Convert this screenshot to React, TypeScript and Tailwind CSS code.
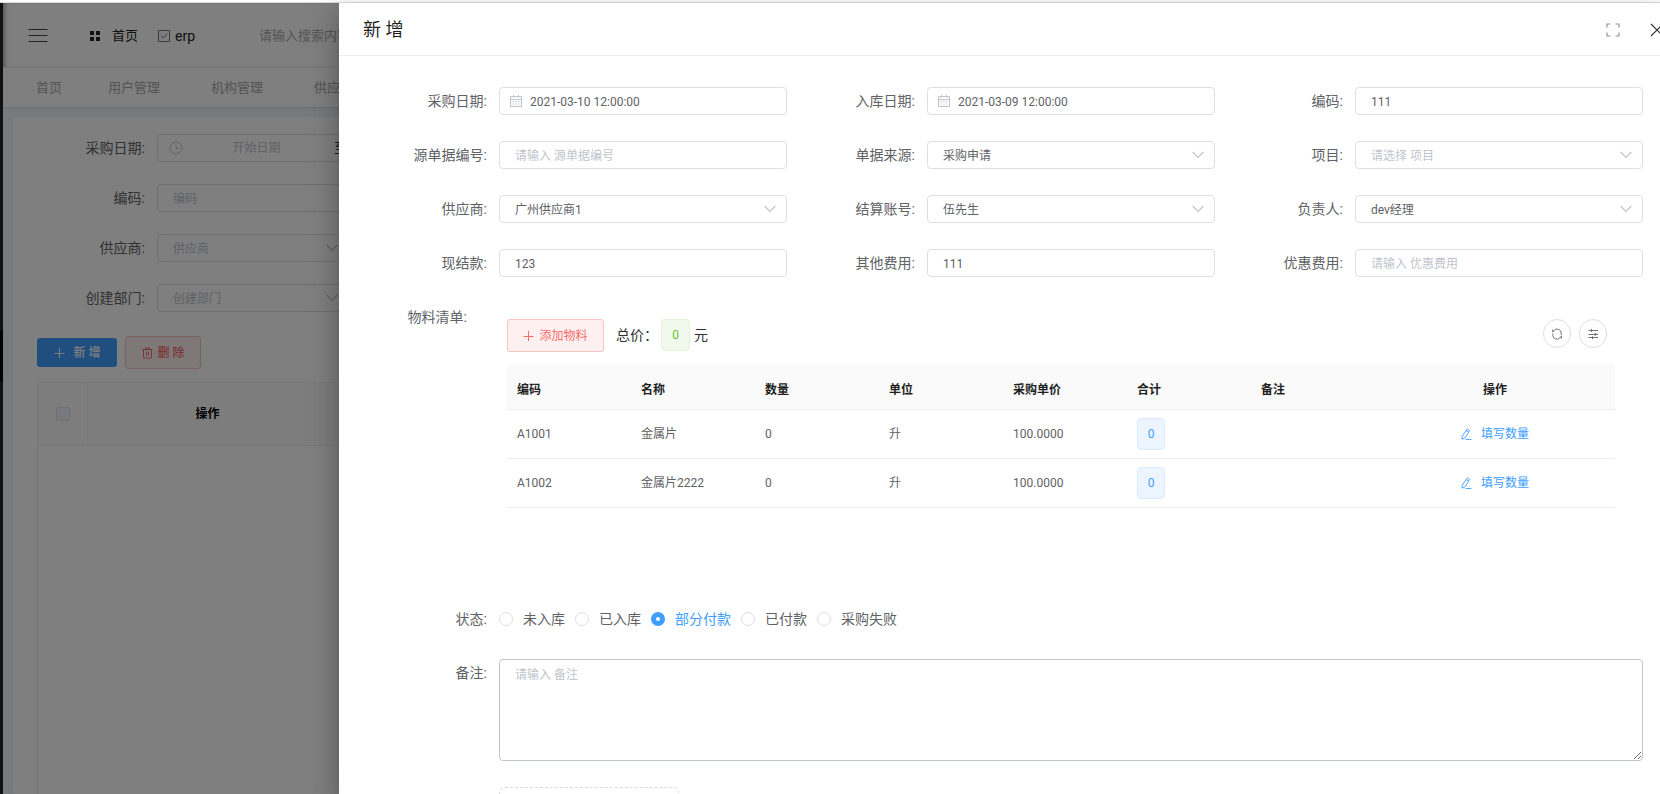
import { useState } from "react";
import type { ReactNode } from "react";

type FieldConfig = {
  id: string;
  label: string;
  type: "date" | "input" | "select";
  value?: string;
  placeholder?: string;
};

const FIELDS: FieldConfig[] = [
  { id: "purchaseDate", label: "采购日期", type: "date", value: "2021-03-10 12:00:00" },
  { id: "stockDate", label: "入库日期", type: "date", value: "2021-03-09 12:00:00" },
  { id: "code", label: "编码", type: "input", value: "111" },
  { id: "sourceNo", label: "源单据编号", type: "input", placeholder: "请输入 源单据编号" },
  { id: "sourceType", label: "单据来源", type: "select", value: "采购申请" },
  { id: "project", label: "项目", type: "select", placeholder: "请选择 项目" },
  { id: "supplier", label: "供应商", type: "select", value: "广州供应商1" },
  { id: "account", label: "结算账号", type: "select", value: "伍先生" },
  { id: "owner", label: "负责人", type: "select", value: "dev经理" },
  { id: "cash", label: "现结款", type: "input", value: "123" },
  { id: "otherFee", label: "其他费用", type: "input", value: "111" },
  { id: "discount", label: "优惠费用", type: "input", placeholder: "请输入 优惠费用" },
];

const MATERIALS = [
  { code: "A1001", name: "金属片", count: 0, unit: "升", price: "100.0000", total: 0 },
  { code: "A1002", name: "金属片2222", count: 0, unit: "升", price: "100.0000", total: 0 },
];

const COLUMNS = ["编码", "名称", "数量", "单位", "采购单价", "合计", "备注"];

const STATUSES = ["未入库", "已入库", "部分付款", "已付款", "采购失败"];

function ChevronIcon() {
  return (
    <svg viewBox="0 0 12 12" className="pointer-events-none absolute right-[11px] top-2 h-3 w-3" fill="none" stroke="#c0c4cc" strokeWidth="1.1">
      <path d="M0.7 3 L6 8.4 L11.3 3" />
    </svg>
  );
}

function CalendarIcon() {
  return (
    <svg viewBox="0 0 12 12" className="pointer-events-none absolute left-[11px] top-2 h-3 w-3" fill="none" stroke="#c0c4cc">
      <path d="M0.5 1.5h11v10h-11z M0.5 4.5h11" />
      <path d="M3.5 0v2.5 M8.5 0v2.5" />
      <path d="M2.5 6.5h1.4 M5.3 6.5h1.4 M8.1 6.5h1.4 M2.5 9h1.4 M5.3 9h1.4 M8.1 9h1.4" />
    </svg>
  );
}

function PlusIcon() {
  return (
    <svg viewBox="0 0 12 12" className="h-3 w-3" fill="none" stroke="currentColor">
      <path d="M5.5 1v10 M0.5 6.5h10" />
    </svg>
  );
}

function TrashIcon() {
  return (
    <svg viewBox="0 0 12 12" className="h-3 w-3" fill="none" stroke="currentColor">
      <path d="M0.5 2.5h10 M3.5 2.5v-1.5h4v1.5 M1.5 2.5v8.5h8v-8.5 M4.5 4.8v4 M6.5 4.8v4" />
    </svg>
  );
}

function EditIcon() {
  return (
    <svg viewBox="0 0 12 12" className="h-3 w-3" fill="none" stroke="currentColor" strokeWidth="0.9">
      <path d="M6.2 1 L8.6 2.5 L4.2 9.8 L1 11.2 L1.2 8.2 Z M5.2 2.7 L7.6 4.2 M4.5 11.5h6" />
    </svg>
  );
}

function RefreshIcon() {
  return (
    <svg viewBox="0 0 12 12" className="h-3 w-3" fill="none" stroke="currentColor">
      <path d="M1.8 4.3v-2.8 M1.8 3.2h1.6 M3.4 2.2 a4 4 0 0 1 6.8 2.6v2.2" strokeWidth="0.9" />
      <path d="M10.4 7.8v2.8 M10.4 9.2h-1.8 M8.6 10 a4 4 0 0 1 -6.8 -2.6v-1.8" strokeWidth="0.9" />
    </svg>
  );
}

function OperationIcon() {
  return (
    <svg viewBox="0 0 12 12" className="h-3 w-3" fill="none" stroke="currentColor">
      <path d="M1.5 2.5h9.5 M1.5 6.5h9.5 M1.5 9.5h9.5" strokeWidth="0.9" />
      <path d="M4.5 1.2v2.6 M8.2 5v2.8 M5.5 8.5v2.6" />
    </svg>
  );
}

const INPUT_CLASS =
  "block h-7 w-full appearance-none rounded border border-[#dcdfe6] bg-white pt-px text-xs text-[#606266] placeholder:text-[#c0c4cc] focus:outline-none";

function SelectBox({ id, value, placeholder }: { id: string; value?: string; placeholder?: string }) {
  return (
    <div className="relative">
      <select
        id={id}
        defaultValue={value ?? ""}
        className={`${INPUT_CLASS} px-[15px] ${value ? "" : "!text-[#c0c4cc]"}`}
      >
        <option value={value ?? ""}>{value ?? placeholder}</option>
      </select>
      <ChevronIcon />
    </div>
  );
}

function Field({ field }: { field: FieldConfig }) {
  return (
    <div className="flex px-2.5">
      <label htmlFor={field.id} className="w-[120px] shrink-0 pr-3 text-right text-sm leading-7">
        {field.label}:
      </label>
      <div className="min-w-0 flex-1">
        {field.type === "select" && <SelectBox id={field.id} value={field.value} placeholder={field.placeholder} />}
        {field.type === "input" && (
          <input
            id={field.id}
            type="text"
            defaultValue={field.value}
            placeholder={field.placeholder}
            className={`${INPUT_CLASS} px-[15px]`}
          />
        )}
        {field.type === "date" && (
          <div className="relative">
            <input id={field.id} type="text" defaultValue={field.value} className={`${INPUT_CLASS} pl-[30px] pr-3`} />
            <CalendarIcon />
          </div>
        )}
      </div>
    </div>
  );
}

function FilterRow({ id, label, children }: { id: string; label: string; children: ReactNode }) {
  return (
    <div className="flex">
      <label htmlFor={id} className="w-36 shrink-0 pr-3 text-right text-sm leading-7">
        {label}:
      </label>
      {children}
    </div>
  );
}

/* list page that lies under the mask */
function ListPage() {
  return (
    <div className="flex min-h-0 flex-1">
      <aside className="w-[3px] shrink-0 bg-[#20222a]">
        <div className="mt-[328px] h-[50px] bg-black" />
      </aside>
      <div className="flex min-w-0 flex-1 flex-col bg-[#f0f2f5]">
        <header className="flex h-[65px] shrink-0 items-center border-b border-[#f0f0f0] bg-white pl-[25px] pt-px text-[13px] shadow-[inset_4px_0_4px_-2px_rgba(0,21,41,0.35)]">
          <button type="button" aria-label="菜单" className="mr-[41px]">
            <svg viewBox="0 0 20 14" className="h-3.5 w-5" stroke="#444" strokeWidth="1.2">
              <path d="M0.5 0.5h19 M0.5 6.5h19 M0.5 12.5h19" />
            </svg>
          </button>
          <a href="#home" className="mr-5 flex items-center gap-[11px] text-[#222]">
            <svg viewBox="0 0 12 12" className="h-3 w-3" fill="#222">
              <path d="M1 1h4v4h-4z M7 1h4v4h-4z M1 7h4v4h-4z M7 7h4v4h-4z" />
            </svg>
            首页
          </a>
          <a href="#erp" className="flex items-center gap-[5px] text-sm text-[#222]">
            <svg viewBox="0 0 12 12" className="h-3 w-3" fill="none" stroke="#777">
              <path d="M0.5 0.5h11v11h-11z M3 5.8 L5.3 8 L9.2 3.6" />
            </svg>
            erp
          </a>
          <input
            type="text"
            aria-label="搜索"
            placeholder="请输入搜索内容"
            className="ml-16 w-48 bg-transparent text-[13px] placeholder:text-[#aaa] focus:outline-none"
          />
        </header>
        <nav className="flex h-[39px] shrink-0 items-center bg-white text-[13px] text-[#a8a8a8] shadow-[0_1px_2px_rgba(0,0,0,0.1)]">
          <a href="#t1" className="pl-[33px] pr-5">首页</a>
          <a href="#t2" className="pl-[26px] pr-[25px]">用户管理</a>
          <a href="#t3" className="pl-[26px] pr-[25px]">机构管理</a>
          <a href="#t4" className="pl-[26px] pr-[25px]">供应商</a>
        </nav>
        <main className="mx-2.5 mt-2.5 flex flex-1 flex-col rounded bg-white pt-[17px]">
          <div className="flex flex-col gap-[22px]">
            <FilterRow id="f-date" label="采购日期">
              <div className="flex h-7 w-[350px] items-center rounded border border-[#dcdfe6] pl-[11px]">
                <svg viewBox="0 0 14 14" className="h-3.5 w-3.5" fill="none" stroke="#c0c4cc">
                  <circle cx="7" cy="7" r="6" />
                  <path d="M7 3.5v4h3.5" />
                </svg>
                <input
                  id="f-date"
                  type="text"
                  placeholder="开始日期"
                  className="w-[151px] pr-1 text-center text-xs placeholder:text-[#c0c4cc] focus:outline-none"
                />
                <span className="text-sm text-[#303133]">至</span>
              </div>
            </FilterRow>
            <FilterRow id="f-code" label="编码">
              <div className="w-48">
                <input id="f-code" type="text" placeholder="编码" className={`${INPUT_CLASS} px-[15px]`} />
              </div>
            </FilterRow>
            <FilterRow id="f-supplier" label="供应商">
              <div className="w-48">
                <SelectBox id="f-supplier" placeholder="供应商" />
              </div>
            </FilterRow>
            <FilterRow id="f-dept" label="创建部门">
              <div className="w-48">
                <SelectBox id="f-dept" placeholder="创建部门" />
              </div>
            </FilterRow>
          </div>
          <div className="ml-6 mt-6 flex items-center gap-2 text-xs font-medium">
            <button type="button" className="flex h-[29px] w-20 items-center justify-center gap-2 rounded-[3px] bg-[#409eff] text-white">
              <PlusIcon />
              新 增
            </button>
            <button
              type="button"
              className="flex h-[33px] w-[76px] items-center justify-center gap-1 rounded-[3px] border border-[#fbc4c4] bg-[#fef0f0] text-[#f56c6c]"
            >
              <TrashIcon />
              删 除
            </button>
          </div>
          <div className="ml-6 mt-[13px] flex-1 border-l border-t border-[#ebeef5]">
            <table className="w-full table-fixed border-separate border-spacing-0 text-xs">
              <colgroup>
                <col className="w-[50px]" />
                <col className="w-60" />
                <col />
              </colgroup>
              <thead>
                <tr className="h-[63px] bg-[#fafafa]">
                  <th className="border-b border-r border-[#ebeef5] p-0">
                    <input
                      type="checkbox"
                      aria-label="全选"
                      className="mx-auto block h-3.5 w-3.5 appearance-none rounded-xs border border-[#dcdfe6] bg-[#edf2fc]"
                    />
                  </th>
                  <th className="border-b border-r border-[#ebeef5] p-0 font-bold text-black">操作</th>
                  <th className="border-b border-[#ebeef5] p-0" />
                </tr>
              </thead>
            </table>
          </div>
        </main>
      </div>
    </div>
  );
}

function MaterialTable() {
  return (
    <table className="mt-[13px] w-full table-fixed border-separate border-spacing-0 text-left text-xs">
      <colgroup>
        {COLUMNS.map((c) => (
          <col key={c} />
        ))}
        <col className="w-60" />
      </colgroup>
      <thead>
        <tr className="h-[45px] bg-[#fafafa] text-[#1f1f1f]">
          {COLUMNS.map((c) => (
            <th key={c} className="border-b border-[#ebeef5] px-2.5 pb-0 pt-1.5 font-bold">{c}</th>
          ))}
          <th className="border-b border-[#ebeef5] px-2.5 pb-0 pt-1.5 text-center font-bold">操作</th>
        </tr>
      </thead>
      <tbody>
        {MATERIALS.map((m) => (
          <tr key={m.code} className="h-[49px]">
            <td className="border-b border-[#ebeef5] px-2.5">{m.code}</td>
            <td className="border-b border-[#ebeef5] px-2.5">{m.name}</td>
            <td className="border-b border-[#ebeef5] px-2.5">{m.count}</td>
            <td className="border-b border-[#ebeef5] px-2.5">{m.unit}</td>
            <td className="border-b border-[#ebeef5] px-2.5">{m.price}</td>
            <td className="border-b border-[#ebeef5] px-2.5">
              <span className="flex h-8 w-7 items-center justify-center rounded border border-[#d9ecff] bg-[#ecf5ff] text-[#409eff]">
                {m.total}
              </span>
            </td>
            <td className="border-b border-[#ebeef5]" />
            <td className="border-b border-[#ebeef5] px-2.5">
              <button type="button" className="mx-auto flex items-center gap-2 text-[#409eff]">
                <EditIcon />
                填写数量
              </button>
            </td>
          </tr>
        ))}
      </tbody>
    </table>
  );
}

function Drawer() {
  const [status, setStatus] = useState("部分付款");

  return (
    <section
      role="dialog"
      aria-label="新增"
      className="absolute bottom-0 left-[339px] right-0 top-[3px] overflow-hidden bg-white shadow-[0_8px_10px_-5px_rgba(0,0,0,0.2),0_16px_24px_2px_rgba(0,0,0,0.14),0_6px_30px_5px_rgba(0,0,0,0.12)]"
    >
      <header className="flex h-[53px] items-center border-b border-[#f0f0f0] pl-6 pt-0.5">
        <h2 className="flex-1 text-lg text-[#1f1f1f]">新 增</h2>
        <button type="button" aria-label="全屏" className="mr-[30px]">
          <svg viewBox="0 0 14 14" className="h-3.5 w-3.5" fill="none" stroke="#909399" strokeWidth="1.2">
            <path d="M1 4.5v-3.5h3.5 M9.5 1h3.5v3.5 M13 9.5v3.5h-3.5 M4.5 13h-3.5v-3.5" />
          </svg>
        </button>
        <button type="button" aria-label="关闭" className="-mr-1">
          <svg viewBox="0 0 14 14" className="h-3.5 w-3.5" fill="none" stroke="#303133" strokeWidth="1.1">
            <path d="M1 1 L13 13 M13 1 L1 13" />
          </svg>
        </button>
      </header>

      <form className="pl-[30px] pr-[7px] pt-[31px]" onSubmit={(e) => e.preventDefault()}>
        <div className="grid grid-cols-3 gap-y-[26px]">
          {FIELDS.map((f) => (
            <Field key={f.id} field={f} />
          ))}
        </div>

        <div className="mt-[26px] flex pl-2.5 pr-[38px]">
          <div className="w-[100px] shrink-0 pr-3 text-right text-sm leading-7">物料清单:</div>
          <div className="ml-7 mt-4 min-w-0 flex-1">
            <div className="flex items-start text-sm text-[#303133]">
              <button
                type="button"
                className="flex h-[33px] w-[97px] items-center justify-center gap-1 rounded-[3px] border border-[#fbc4c4] bg-[#fef0f0] text-xs text-[#f56c6c]"
              >
                <PlusIcon />
                添加物料
              </button>
              <span className="ml-3 leading-8">总价：</span>
              <span className="ml-[3px] mr-1 flex h-8 w-[29px] items-center justify-center rounded border border-[#e1f3d8] bg-[#f0f9eb] text-xs text-[#67c23a]">
                0
              </span>
              <span className="leading-8">元</span>
              <div className="ml-auto mr-2 flex gap-2 text-[#606266]">
                <button type="button" aria-label="刷新" className="flex h-[29px] w-7 items-center justify-center rounded-full border border-[#dcdfe6]">
                  <RefreshIcon />
                </button>
                <button type="button" aria-label="列设置" className="flex h-[29px] w-7 items-center justify-center rounded-full border border-[#dcdfe6]">
                  <OperationIcon />
                </button>
              </div>
            </div>
            <MaterialTable />
          </div>
        </div>

        <fieldset className="mt-[97px] flex px-2.5 text-sm leading-7">
          <legend className="float-left w-[120px] shrink-0 pr-3 text-right">状态:</legend>
          <div className="flex gap-2.5">
            {STATUSES.map((s) => (
              <label key={s} className={`flex items-center gap-2.5 ${s === status ? "text-[#409eff]" : ""}`}>
                <input
                  type="radio"
                  name="status"
                  checked={s === status}
                  onChange={() => setStatus(s)}
                  className="h-3.5 w-3.5 appearance-none rounded-full border border-[#dcdfe6] bg-white checked:border-[5px] checked:border-[#409eff]"
                />
                {s}
              </label>
            ))}
          </div>
        </fieldset>

        <div className="mt-[26px] flex px-2.5">
          <label htmlFor="remark" className="w-[120px] shrink-0 pr-3 text-right text-sm leading-7">
            备注:
          </label>
          <textarea
            id="remark"
            placeholder="请输入 备注"
            className="block h-[102px] flex-1 resize-y rounded border border-[#c0c4cc] px-[15px] py-1.5 text-xs leading-[18px] placeholder:text-[#c0c4cc] focus:outline-none"
          />
        </div>

        <button
          type="button"
          aria-label="上传"
          className="ml-[130px] mt-[26px] block h-[180px] w-[180px] rounded-md border border-dashed border-[#d9d9d9]"
        />
      </form>
    </section>
  );
}

export default function App() {
  return (
    <div className="relative flex h-screen flex-col overflow-hidden bg-white font-[Roboto,'Noto_Sans_CJK_SC',sans-serif] text-[#606266]">
      <div className="h-[3px] shrink-0 border-b border-[#dcdcdc]" />
      <ListPage />
      <div className="absolute inset-x-0 bottom-0 top-[3px] bg-black/50" />
      <Drawer />
    </div>
  );
}
